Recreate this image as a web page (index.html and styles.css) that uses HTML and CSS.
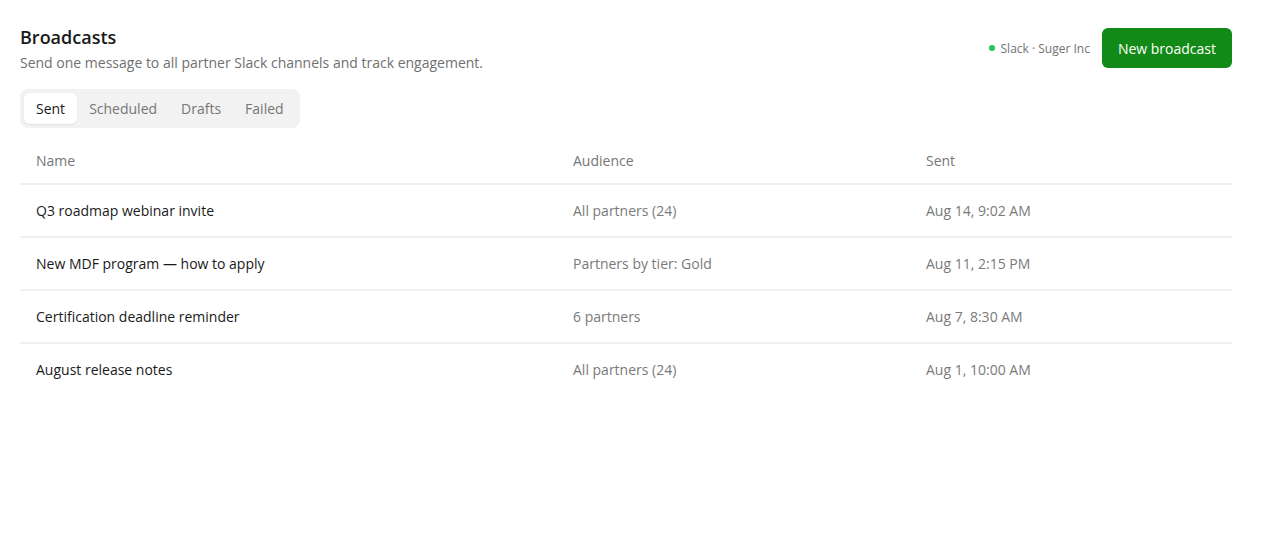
FILE: index.html
```html
<!DOCTYPE html>
<html>
<head>
<meta charset="utf-8">
<link rel="stylesheet" href="styles.css">
</head>
<body>
<div class="page">
  <header class="head">
    <div class="titles">
      <h1 class="title">Broadcasts</h1>
      <p class="subtitle">Send one message to all partner Slack channels and track engagement.</p>
    </div>
    <div class="actions">
      <span class="conn"><span class="dot"></span>Slack · Suger Inc</span>
      <button class="btn">New broadcast</button>
    </div>
  </header>
  <div class="tabs">
    <span class="tab active">Sent</span>
    <span class="tab">Scheduled</span>
    <span class="tab">Drafts</span>
    <span class="tab">Failed</span>
  </div>
  <table class="tbl">
    <colgroup><col class="c1"><col class="c2"><col class="c3"></colgroup>
    <thead>
      <tr><th>Name</th><th>Audience</th><th>Sent</th></tr>
    </thead>
    <tbody>
      <tr><td class="name">Q3 roadmap webinar invite</td><td>All partners (24)</td><td>Aug 14, 9:02 AM</td></tr>
      <tr><td class="name">New MDF program — how to apply</td><td>Partners by tier: Gold</td><td>Aug 11, 2:15 PM</td></tr>
      <tr><td class="name">Certification deadline reminder</td><td>6 partners</td><td>Aug 7, 8:30 AM</td></tr>
      <tr><td class="name">August release notes</td><td>All partners (24)</td><td>Aug 1, 10:00 AM</td></tr>
    </tbody>
  </table>
</div>
</body>
</html>
```
FILE: styles.css
```css
* { box-sizing: border-box; }
body {
  margin: 0;
  background: #fff;
  font-family: "Open Sans", "Noto Sans", sans-serif;
  color: #1a1a1a;
}
.page { padding: 26px 32px 0 20px; }
.head {
  display: flex;
  justify-content: space-between;
  align-items: flex-start;
}
.title {
  margin: 0;
  font-size: 18px;
  font-weight: 600;
  line-height: 22px;
  color: #1a1a1a;
}
.subtitle {
  margin: 5px 0 0;
  font-size: 14px;
  line-height: 19px;
  color: #707070;
}
.actions {
  display: flex;
  align-items: center;
  gap: 12px;
  margin-top: 2px;
}
.conn {
  display: flex;
  align-items: center;
  gap: 6px;
  font-size: 12px;
  color: #737373;
}
.dot {
  width: 6px;
  height: 6px;
  border-radius: 50%;
  background: #22c55e;
}
.btn {
  height: 40px;
  padding: 0 16px;
  border: 0;
  border-radius: 6px;
  background: #138a17;
  color: #fff;
  font-family: inherit;
  font-size: 14px;
}
.tabs {
  display: inline-flex;
  margin-top: 17px;
  padding: 4px;
  background: #f2f2f2;
  border-radius: 8px;
}
.tab {
  padding: 6px 12px;
  font-size: 14px;
  line-height: 19px;
  color: #767676;
  border-radius: 6px;
}
.tab.active {
  background: #fff;
  color: #1a1a1a;
  box-shadow: 0 1px 2px rgba(0,0,0,0.08);
}
.tbl {
  width: 100%;
  margin-top: 12px;
  border-collapse: collapse;
  font-size: 14px;
}
.c1 { width: 537px; }
.c2 { width: 353px; }
.tbl th {
  text-align: left;
  font-weight: 400;
  color: #767676;
  padding: 0 16px 2px;
  height: 44px;
  border-bottom: 2px solid #f0f0f0;
}
.tbl td {
  padding: 0 16px;
  height: 53px;
  color: #7a7a7a;
  border-bottom: 2px solid #f0f0f0;
}
.tbl td.name { color: #1a1a1a; }
.tbl tbody tr:last-child td { border-bottom-color: transparent; }
```
